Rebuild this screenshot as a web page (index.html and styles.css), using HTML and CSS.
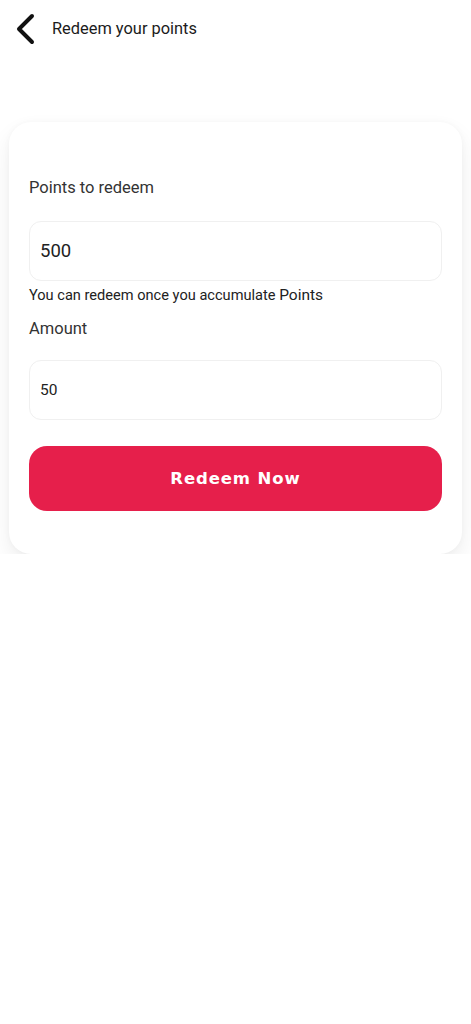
FILE: index.html
```html
<!DOCTYPE html>
<html lang="en">
<head>
    <meta charset="UTF-8">
    <meta name="viewport" content="width=device-width, initial-scale=1.0">
    <title>Redeem your points</title>
    <link rel="stylesheet" href="styles.css">
</head>
<body>
    <header class="top-bar">
        <button class="back-btn" type="button" aria-label="Back">
            <svg width="22" height="32" viewBox="0 0 22 32">
                <path d="M18 3 L5 16 L18 29" fill="none" stroke="#111" stroke-width="4" stroke-linecap="round" stroke-linejoin="round"/>
            </svg>
        </button>
        <h1 class="title">Redeem your points</h1>
    </header>

    <form class="card" id="redeemForm">
        <label class="field-label" for="points">Points to redeem</label>
        <input class="field-input big" type="text" id="points" value="500">
        <p class="hint">You can redeem once you accumulate <span>Points</span></p>
        <label class="field-label amount" for="amount">Amount</label>
        <input class="field-input second" type="text" id="amount" value="50">
        <button class="redeem-btn" type="submit">Redeem Now</button>
    </form>
</body>
</html>
```

FILE: styles.css
```css
body {
    margin: 0;
    font-family: Roboto, "Liberation Sans", Arial, sans-serif;
    background: #ffffff;
    color: #2a2a2a;
}
.top-bar {
    display: flex;
    align-items: center;
    height: 57px;
    padding: 0 12px;
}
.back-btn {
    background: none;
    border: none;
    padding: 0;
    width: 26px;
    height: 32px;
    cursor: pointer;
}
.title {
    margin: 0 0 0 14px;
    font-size: 16.4px;
    font-weight: 400;
    color: #1b1b1b;
}
.card {
    display: flex;
    flex-direction: column;
    margin: 65px 9px 0;
    padding: 56px 20px 43px;
    background: #fff;
    border-radius: 22px;
    box-shadow: 0 10px 22px rgba(0, 0, 0, 0.07), 0 0 6px rgba(0, 0, 0, 0.03);
}
.field-label {
    font-size: 16.5px;
    color: #333;
    line-height: 19px;
}
.field-label.amount {
    margin-top: 15px;
}
.field-input {
    margin-top: 24px;
    height: 60px;
    box-sizing: border-box;
    padding: 0 10px;
    border: 1px solid #f0f0f0;
    border-radius: 12px;
    font-family: Roboto, "Liberation Sans", Arial, sans-serif;
    font-size: 15.5px;
    color: #222;
    background: #fff;
    outline: none;
}
.field-input.big {
    font-size: 18.5px;
}
.field-input.second {
    margin-top: 22px;
}
.hint {
    margin: 6px 0 0;
    font-size: 14.6px;
    color: #222;
    line-height: 17px;
}
.hint span {
    font-size: 15.5px;
}
.redeem-btn {
    margin-top: 26px;
    height: 65px;
    border: none;
    border-radius: 18px;
    background: #e61f4b;
    color: #fff;
    font-family: "DejaVu Sans", sans-serif;
    font-weight: 700;
    font-size: 16.5px;
    letter-spacing: 0.9px;
    cursor: pointer;
}
```
